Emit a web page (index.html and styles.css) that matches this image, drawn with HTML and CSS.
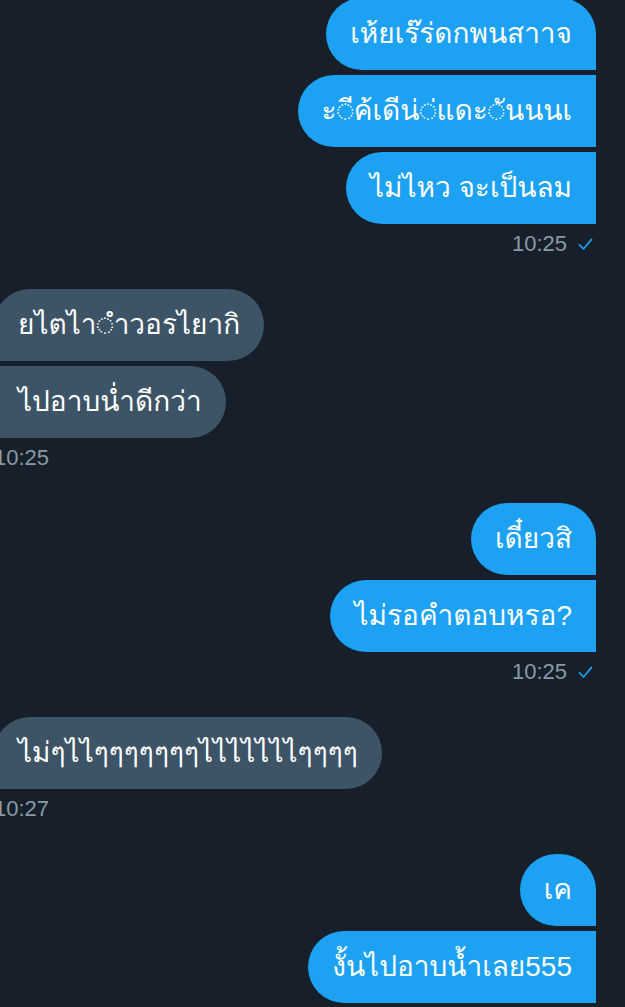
FILE: index.html
```html
<!DOCTYPE html>
<html lang="th">
<head>
  <meta charset="UTF-8">
  <title>Messages</title>
  <link rel="stylesheet" href="styles.css">
</head>
<body>
<div class="chat">

  <div class="group sent">
    <div class="bubble first">เห้ยเร๊ร่ดกพนสาาจ</div>
    <div class="bubble">ะ◌ีค้เดีน่◌่แดะ◌ันนนเ</div>
    <div class="bubble">ไม่ไหว จะเป็นลม</div>
    <div class="meta">10:25
      <svg class="check" viewBox="0 0 16 14" width="15" height="13"><path d="M1.5 7.5 L5.8 11.8 L14.5 1.5" fill="none" stroke="#1da1f2" stroke-width="1.8" stroke-linecap="round" stroke-linejoin="round"/></svg>
    </div>
  </div>

  <div class="group received">
    <div class="bubble first">ยไตไา◌ําวอรไยากิ</div>
    <div class="bubble">ไปอาบน่ำดีกว่า</div>
    <div class="meta">10:25</div>
  </div>

  <div class="group sent">
    <div class="bubble first">เดี๋ยวสิ</div>
    <div class="bubble">ไม่รอคำตอบหรอ?</div>
    <div class="meta">10:25
      <svg class="check" viewBox="0 0 16 14" width="15" height="13"><path d="M1.5 7.5 L5.8 11.8 L14.5 1.5" fill="none" stroke="#1da1f2" stroke-width="1.8" stroke-linecap="round" stroke-linejoin="round"/></svg>
    </div>
  </div>

  <div class="group received">
    <div class="bubble first">ไม่ๆไไๆๆๆๆๆๆๆไไไไไไไๆๆๆๆ</div>
    <div class="meta">10:27</div>
  </div>

  <div class="group sent">
    <div class="bubble first">เค</div>
    <div class="bubble">งั้นไปอาบน้ำเลย555</div>
  </div>

</div>
<div class="composer"></div>
</body>
</html>
```

FILE: styles.css
```css
* {
  box-sizing: border-box;
}

body {
  background: #17202a;
  font-family: 'Liberation Sans', 'Loma', 'Waree', 'Garuda', 'Noto Sans Thai Looped', 'Noto Sans Thai', sans-serif;
  margin: 0;
  padding: 0;
  overflow: hidden;
}

.chat {
  display: flex;
  flex-direction: column;
  margin: -2px 0 0 -6px;
  padding-right: 29px;
}

.group {
  display: flex;
  flex-direction: column;
  gap: 5px;
  margin-bottom: 32px;
}

.group.sent {
  align-items: flex-end;
}

.group.received {
  align-items: flex-start;
}

.bubble {
  color: #fff;
  font-size: 28px;
  line-height: 36px;
  padding: 18px 24px;
  white-space: nowrap;
}

.sent .bubble {
  background-color: #1da1f2;
  border-radius: 36px 0 0 36px;
}

.sent .bubble.first {
  border-radius: 36px 36px 0 36px;
}

.received .bubble {
  background-color: #3d5466;
  border-radius: 0 36px 36px 0;
}

.received .bubble.first {
  border-radius: 36px 36px 36px 0;
}

.meta {
  display: flex;
  align-items: center;
  gap: 11px;
  margin: 2px 3px 0 0;
  color: #8899a6;
  font-family: 'Liberation Sans', sans-serif;
  font-size: 22px;
  line-height: 26px;
}

.check {
  display: block;
}

.composer {
  border-top: 1px solid #3a4753;
  height: 40px;
}
```
